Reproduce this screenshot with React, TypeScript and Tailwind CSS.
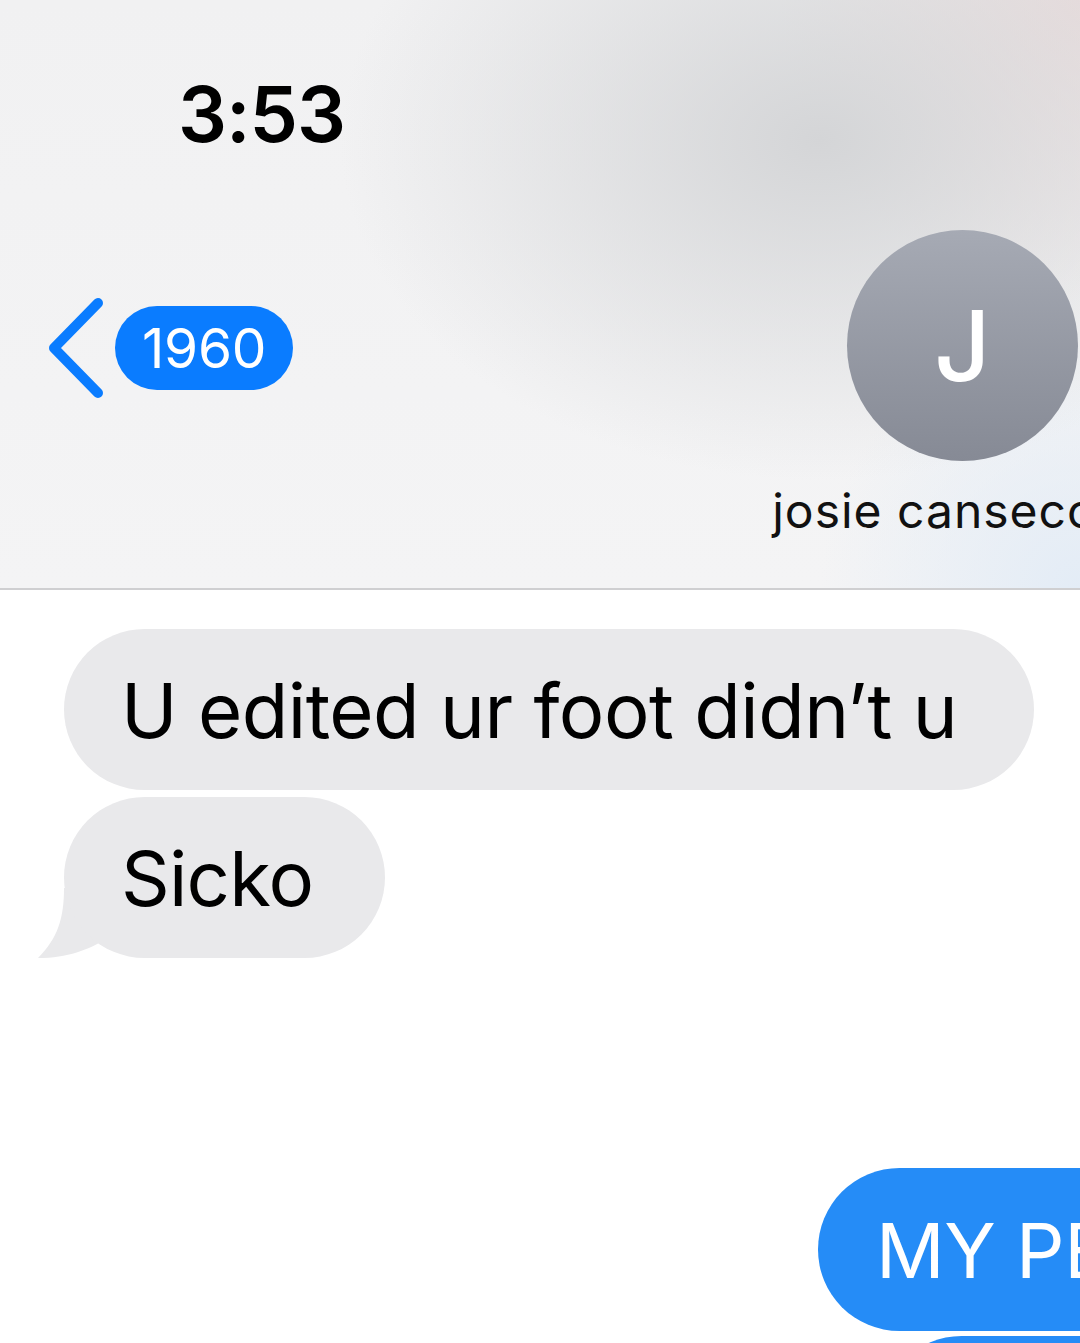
import React from 'react';

const Chevron: React.FC = () => (
  <svg width="60" height="100" viewBox="0 0 60 100" className="shrink-0">
    <polyline
      points="50,5 6,50 50,95"
      fill="none"
      stroke="#0a7cff"
      strokeWidth="10"
      strokeLinecap="round"
      strokeLinejoin="round"
    />
  </svg>
);

const App: React.FC = () => {
  return (
    <div className="w-[1080px] h-[1343px] overflow-hidden bg-white font-['Inter','Liberation_Sans',sans-serif]">
      <header className="h-[590px] border-b-2 border-[#cfcfd1] bg-[radial-gradient(ellipse_480px_340px_at_820px_140px,#d4d5d7,transparent),radial-gradient(ellipse_300px_300px_at_1080px_0px,#ecdede,transparent),radial-gradient(ellipse_260px_260px_at_1080px_590px,#e3ecf6,transparent),linear-gradient(#f1f1f2,#f4f4f5)] flex flex-col">
        <div className="pl-[178px] pt-[76px] h-[230px]">
          <span className="text-[77px] leading-none font-semibold tracking-[-1px] text-black">3:53</span>
        </div>
        <div className="flex items-start justify-between pl-[48px]">
          <div className="flex items-center gap-[7px] mt-[68px]">
            <Chevron />
            <div className="h-[84px] px-[27px] rounded-full bg-[#0a7cff] flex items-center">
              <span className="text-[55px] leading-none text-white tracking-[-0.3px]">1960</span>
            </div>
          </div>
          <div className="w-[231px] mr-[2px] flex flex-col items-center">
            <div className="w-[231px] h-[231px] rounded-full bg-gradient-to-b from-[#a6aab4] to-[#868a95] flex items-center justify-center">
              <span className="text-[98px] leading-none font-medium text-white">J</span>
            </div>
            <span className="mt-[26px] mr-[56px] whitespace-nowrap text-[48px] leading-none tracking-[1px] text-[#111]">josie canseco</span>
          </div>
        </div>
      </header>

      <main className="flex flex-col pt-[39px]">
        <div className="flex flex-col gap-[7px] pl-[64px]">
          <div className="w-fit h-[161px] pl-[57px] pr-[77px] rounded-full bg-[#e9e9eb] flex items-center">
            <span className="text-[76px] leading-none text-black tracking-[-0.5px]">U edited ur foot didn’t u</span>
          </div>
          <div className="relative w-fit">
            <svg width="90" height="70" viewBox="0 0 90 70" className="absolute left-[-26px] bottom-0">
              <path d="M26 0 C26 30 20 50 0 70 C30 70 50 62 70 50 L90 40 L90 0 Z" fill="#e9e9eb" />
            </svg>
            <div className="relative h-[161px] pl-[57px] pr-[72px] rounded-full bg-[#e9e9eb] flex items-center">
              <span className="text-[76px] leading-none text-black tracking-[-0.8px]">Sicko</span>
            </div>
          </div>
        </div>
        <div className="flex justify-end mt-[210px]">
          <div className="w-[262px] h-[163px] pl-[58px] rounded-l-full bg-[#258cf7] flex items-center overflow-hidden">
            <span className="text-[76px] leading-none text-white whitespace-nowrap tracking-[-0.5px]">MY PENIS</span>
          </div>
        </div>
        <div className="flex justify-end mt-[5px]">
          <div className="w-[200px] h-[163px] rounded-l-full bg-[#258cf7]" />
        </div>
      </main>
    </div>
  );
};

export default App;
